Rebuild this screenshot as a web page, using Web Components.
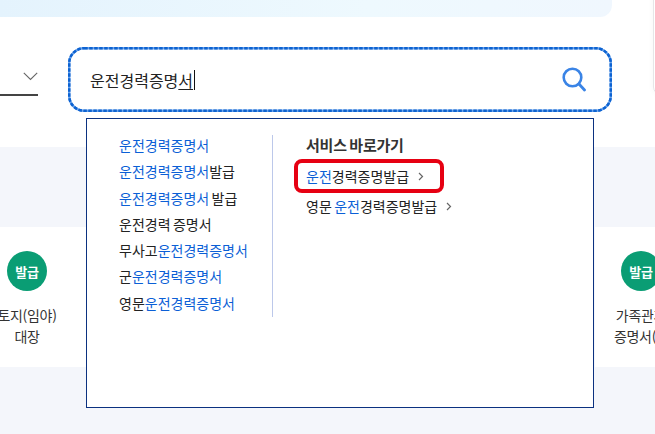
<!DOCTYPE html>
<html lang="ko">
<head>
<meta charset="utf-8">
<style>
  html, body { margin: 0; padding: 0; }
  body {
    width: 655px;
    height: 434px;
    overflow: hidden;
    background: #f4f6fb;
    font-family: "Noto Sans CJK KR", "Noto Sans", sans-serif;
    color: #222;
  }
</style>
</head>
<body>
<gov-page></gov-page>

<script>
class GovPage extends HTMLElement {
  constructor() {
    super();
    this.attachShadow({ mode: "open" });
    this.shadowRoot.innerHTML = `
      <style>
        :host { display: block; position: relative; width: 655px; height: 434px; overflow: hidden; }
        .top { background: #fff; height: 147px; }
        .banner {
          height: 17px; width: 612px; border-radius: 0 0 12px 0;
          background: linear-gradient(90deg, #e4f3fd, #eef9fe 60%, #f0f7fe);
        }
        .search-row { display: flex; margin-top: 30px; align-items: flex-start; }
        .band { height: 80px; }
        .cards { display: flex; justify-content: space-between; height: 140px; }
        .cut { margin-right: 12px; }
        /* edge of the next card, peeking in at the right */
        .peek { position: absolute; left: 653px; top: -10px; width: 30px; height: 105px; box-sizing: border-box;
                border: 1px solid #e6e6e8; border-radius: 8px; box-shadow: 0 0 6px rgba(0,0,0,.04); }
      </style>
      <div class="top">
        <div class="banner"></div>
        <div class="search-row">
          <select-stub></select-stub>
          <search-box>운전경력증명서</search-box>
        </div>
      </div>
      <div class="band"></div>
      <div class="cards">
        <issue-card side="left"><span>토지(임야)</span><span>대장</span></issue-card>
        <issue-card side="right"><span>가족관계</span><span class="cut">증명서(</span></issue-card>
      </div>
      <div class="peek"></div>
      <suggest-panel></suggest-panel>`;
  }
}

class SelectStub extends HTMLElement {
  constructor() {
    super();
    this.attachShadow({ mode: "open" });
    this.shadowRoot.innerHTML = `
      <style>
        :host { display: flex; justify-content: flex-end; align-items: flex-end; box-sizing: border-box;
                width: 38px; height: 49px; margin-right: 30px; border-bottom: 2px solid #444; padding-bottom: 13px; }
        svg { display: block; }
      </style>
      <svg width="15" height="9" viewBox="0 0 15 9"><path d="M.8 .8l6.7 6.7 6.7-6.7" fill="none" stroke="#666" stroke-width="1.1"/></svg>`;
  }
}

class SearchBox extends HTMLElement {
  constructor() {
    super();
    this.attachShadow({ mode: "open" });
    this.shadowRoot.innerHTML = `
      <style>
        :host { display: flex; align-items: center; justify-content: space-between; box-sizing: border-box; position: relative;
                width: 544px; height: 65px; padding: 0 26px 0 22px; background: #fff; }
        .ring { position: absolute; left: 0; top: 0; width: 544px; height: 65px; }
        .text { font-size: 16px; line-height: 22px; color: #222; display: flex; align-items: center; position: relative; }
        .last { text-decoration: underline; text-underline-offset: 2px; }
        .caret { display: inline-block; width: 1px; height: 20px; background: #111; margin-left: 1px; }
        .glass { display: block; position: relative; }
      </style>
      <svg class="ring" viewBox="0 0 544 65"><rect x="1.2" y="1.2" width="541.6" height="62.6" rx="15" fill="none" stroke="#6ba3ea" stroke-width="2.4"/><rect x="1.2" y="1.2" width="541.6" height="62.6" rx="15" fill="none" stroke="#0d63d2" stroke-width="2.6" stroke-dasharray="3.5 1.5"/></svg>
      <div class="text"><span>운전경력증명</span><span class="last">서</span><i class="caret"></i></div>
      <svg class="glass" width="24" height="25" viewBox="0 0 24 25"><circle cx="10.5" cy="10.5" r="8.8" fill="none" stroke="#3a84e6" stroke-width="2.6"/><path d="M17 17l5.5 6" stroke="#3a84e6" stroke-width="2.8" stroke-linecap="round"/></svg>`;
  }
}

class SuggestPanel extends HTMLElement {
  constructor() {
    super();
    this.attachShadow({ mode: "open" });
    const words = [
      "<b>운전경력증명서</b>",
      "<b>운전경력증명서</b>발급",
      "<b>운전경력증명서</b> 발급",
      "운전경력 증명서",
      "무사고<b>운전경력증명서</b>",
      "군<b>운전경력증명서</b>",
      "영문<b>운전경력증명서</b>"
    ];
    const chevron = `<svg width="6" height="9" viewBox="0 0 6 9"><path d="M1 1l3.5 3.5L1 8" fill="none" stroke="#666" stroke-width="1.2"/></svg>`;
    this.shadowRoot.innerHTML = `
      <style>
        :host { display: flex; position: absolute; left: 86px; top: 118px; box-sizing: border-box;
                width: 508px; height: 290px; background: #fff; border: 1px solid #0b3180;
                padding: 16px 0 0 32px; font-size: 14px; color: #222; word-spacing: -1.5px; }
        b { font-weight: 400; color: #0b5fd6; }
        .left { width: 154px; height: 182px; border-right: 1px solid #bcc8ea; box-sizing: border-box; }
        .left div { height: 26.3px; line-height: 20px; white-space: nowrap; }
        .right { padding-left: 33px; }
        h3 { margin: 0 0 6px; font-size: 15px; line-height: 20px; font-weight: 700; color: #333; letter-spacing: -0.2px; }
        .row { display: flex; align-items: center; height: 30px; white-space: nowrap; position: relative; }
        .row svg { margin-left: 9px; flex: none; }
        .row.hit::before { content: ""; position: absolute; left: -12px; top: -2px; width: 150px; height: 34px; box-sizing: border-box;
                           border: 4px solid #e60012; border-radius: 8px; }
      </style>
      <div class="left">${words.map((w) => `<div>${w}</div>`).join("")}</div>
      <div class="right">
        <h3>서비스 바로가기</h3>
        <div class="row hit"><span><b>운전</b>경력증명발급</span>${chevron}</div>
        <div class="row"><span>영문 <b>운전</b>경력증명발급</span>${chevron}</div>
      </div>`;
  }
}

class IssueCard extends HTMLElement {
  constructor() {
    super();
    this.attachShadow({ mode: "open" });
    const left = this.getAttribute("side") === "left";
    this.shadowRoot.innerHTML = `
      <style>
        :host { display: flex; flex-direction: column; align-items: flex-start; box-sizing: border-box; background: #fff;
                width: ${left ? 86 : 60}px; height: 140px; padding-top: 24px; padding-left: ${left ? 7 : 26}px;
                font-size: 14px; color: #333; }
        .inner { display: flex; flex-direction: column; align-items: center; width: 40px; flex: none; }
        .badge { width: 40px; height: 40px; border-radius: 50%; background: #0a9d74; color: #fff; font-size: 13px; font-weight: 700;
                 display: flex; align-items: center; justify-content: center; flex: none; letter-spacing: -0.3px; margin-bottom: 14px; }
        .label { display: flex; flex-direction: column; align-items: center; line-height: 21px; letter-spacing: -0.3px; white-space: nowrap; }
      </style>
      <div class="inner">
        <div class="badge">발급</div>
        <div class="label"><slot></slot></div>
      </div>`;
  }
}

customElements.define("gov-page", GovPage);
customElements.define("select-stub", SelectStub);
customElements.define("search-box", SearchBox);
customElements.define("suggest-panel", SuggestPanel);
customElements.define("issue-card", IssueCard);
</script>
</body>
</html>
